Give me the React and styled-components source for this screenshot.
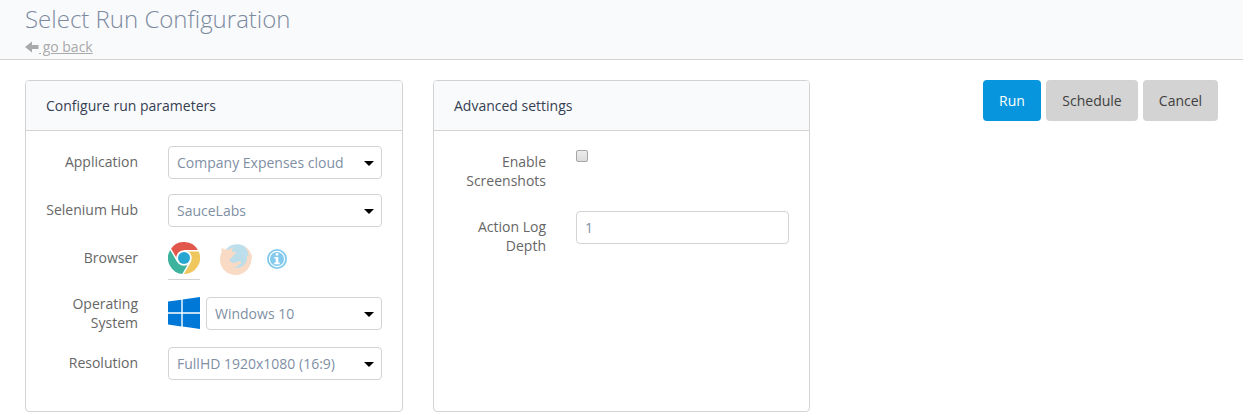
import React from "react";
import styled, { createGlobalStyle } from "styled-components";

const GlobalStyle = createGlobalStyle`
  *, *::before, *::after { box-sizing: border-box; }
  body {
    margin: 0;
    background: #fff;
    color: #666;
    font: 14px/19px "Open Sans", "Noto Sans", sans-serif;
  }
`;

const Header = styled.header`
  height: 60px;
  padding: 2px 25px 0;
  background: #f9fafc;
  border-bottom: 1px solid #d3d3d3;
`;

const Title = styled.h1`
  margin: 0;
  color: #7c8aa0;
  font-size: 24px;
  font-weight: 300;
  line-height: 33px;
`;

const BackLink = styled.a`
  display: flex;
  align-items: center;
  width: max-content;
  margin-top: 2px;
  color: #a9a9a9;

  span {
    text-decoration: underline;
    white-space: pre;
  }
`;

const Content = styled.main`
  display: flex;
  align-items: flex-start;
  padding: 20px 25px 7px;
`;

const Panel = styled.section`
  width: ${(p) => p.$width}px;
  height: 332px;
  margin-right: 30px;
  border: 1px solid #d3d3d3;
  border-radius: 4px;
  overflow: hidden;
`;

const PanelTitle = styled.h2`
  height: 50px;
  margin: 0;
  padding: 0 20px;
  background: #f9fafc;
  border-bottom: 1px solid #d3d3d3;
  color: #354052;
  font-size: 14px;
  font-weight: 400;
  line-height: 49px;
`;

const PanelBody = styled.div`
  padding: 15px 20px 0 0;
`;

const Row = styled.div`
  display: flex;
  height: ${(p) => p.$height}px;
`;

const Label = styled.label`
  flex: none;
  width: 112px;
  margin-right: 30px;
  padding: 6px 0 0 16px;
  text-align: right;
`;

const Control = styled.div`
  display: flex;
  align-items: flex-start;
  flex: 1;
  min-width: 0;
  padding-top: ${(p) => p.$top || 0}px;
`;

const SelectBox = styled.div`
  display: grid;
  flex: 1;
  align-items: center;
  margin-left: ${(p) => p.$gap || 0}px;

  > * { grid-area: 1 / 1; }
  > svg { justify-self: end; margin: 2px 8px 0 0; pointer-events: none; }
`;

const Field = styled.select`
  appearance: none;
  width: 100%;
  height: 33px;
  margin: 0;
  padding: 0 24px 0 8px;
  border: 1px solid #d3d3d3;
  border-radius: 4px;
  background: #fff;
  color: #7f8fa4;
  font: inherit;
  outline: none;
`;

const Checkbox = styled.input`
  appearance: none;
  width: 12px;
  height: 12px;
  margin: 4px 0 0;
  border: 1px solid #a6a6a6;
  border-radius: 2px;
  background: linear-gradient(#ececec, #dcdcdc);
`;

const BrowserChoice = styled.button`
  display: flex;
  align-items: flex-start;
  width: 32px;
  height: 38px;
  margin: 0 20px 0 0;
  padding: 0;
  border: 0;
  border-bottom: 1px solid ${(p) => (p.$active ? "#d3d3d3" : "transparent")};
  background: none;

  svg { flex: none; opacity: ${(p) => (p.$active ? 1 : 0.3)}; }
`;

const InfoIcon = styled.svg`
  margin: 7px 0 0 -5px;
`;

const Actions = styled.div`
  display: flex;
  gap: 5px;
  margin-left: auto;
`;

const Button = styled.button`
  width: ${(p) => p.$width}px;
  height: 41px;
  padding: 0;
  border: 0;
  border-radius: 4px;
  background: ${(p) => (p.$primary ? "#0795dd" : "#d3d3d3")};
  color: ${(p) => (p.$primary ? "#fff" : "#404040")};
  font: inherit;
`;

function Select({ value, gap }) {
  return (
    <SelectBox $gap={gap}>
      <Field defaultValue={value}>
        <option>{value}</option>
      </Field>
      <svg width="10" height="5" viewBox="0 0 10 5">
        <path d="M0 0H10L5 5Z" fill="#000" />
      </svg>
    </SelectBox>
  );
}

function Chrome() {
  return (
    <svg width="32" height="32" viewBox="0 0 32 32">
      <path d="M2.5 7.4A16 16 0 0 1 30.2 8.6H16L9.6 19.7Z" fill="#e2574c" />
      <path d="M30.2 8.6A16 16 0 0 1 15.3 32L22.4 19.7L16 8.6Z" fill="#f0c75e" />
      <path d="M15.3 32A16 16 0 0 1 2.5 7.4L9.6 19.7H22.4Z" fill="#3db39e" />
      <path d="M16 8.8H31M22.2 19.6L14.8 32.5M9.8 19.6L1.8 5.8" stroke="#fff" strokeWidth="1.5" />
      <circle cx="16" cy="16" r="7.8" fill="#fff" />
      <circle cx="16" cy="16" r="6" fill="#26a6d1" />
    </svg>
  );
}

function Firefox() {
  return (
    <svg width="32" height="34" viewBox="0 0 32 34">
      <circle cx="17" cy="16.5" r="14.3" fill="#2394bc" />
      <path
        d="M2.2 5.2C2.6 6.2 3.2 7 4 7.6C5.6 7 7.6 7.1 9.1 7.8C10.1 6.6 11.8 5.6 13.5 5.5C12.6 6.5 11.9 8 11.9 9.5L16.1 10.2C16.4 11.7 14.9 12.5 12.7 13.5L12.2 16.2L9.7 16C9.2 19.2 11.5 21.3 14.3 21C17 20.3 18.8 18.2 21.1 19.8C22 20.7 20.7 21.7 19.6 22C18.2 24 15.9 25.3 13.6 25C17.5 27 22.5 25.2 25 21.8C27.2 19 27.5 15.8 26.6 13.2C27.5 13.6 28.1 14.4 28.5 15.2C28.8 10.6 27.1 6.7 24 4.5C28.5 6.5 31 10 31.1 13.2L31.5 11.5C33.1 23.7 25.4 33 16 33C6.8 33 0 26.1 0 17.7C0 14.8.4 12.2 1.6 10.2C1.2 8.3 1.4 6.5 2.2 5.2Z"
        fill="#ec8840"
      />
    </svg>
  );
}

function Windows() {
  return (
    <svg width="32" height="32" viewBox="0 0 32 32" fill="#0078d7">
      <path d="M0 4.6L13.3 2.7V15.3H0ZM14.7 2.5L32 0V15.3H14.7ZM0 16.7H13.3V29.4L0 27.5ZM14.7 16.7H32V32L14.7 29.6Z" />
    </svg>
  );
}

export default function App() {
  return (
    <>
      <GlobalStyle />
      <Header>
        <Title>Select Run Configuration</Title>
        <BackLink>
          <svg width="14" height="12" viewBox="0 0 14 12">
            <path d="M0 6L7 .5V4H13.5V8H7V11.5Z" fill="#a9a9a9" />
          </svg>
          <span> go back</span>
        </BackLink>
      </Header>
      <Content>
        <Panel $width={378}>
          <PanelTitle>Configure run parameters</PanelTitle>
          <PanelBody>
            <Row $height={48}>
              <Label>Application</Label>
              <Control><Select value="Company Expenses cloud" /></Control>
            </Row>
            <Row $height={48}>
              <Label>Selenium Hub</Label>
              <Control><Select value="SauceLabs" /></Control>
            </Row>
            <Row $height={46}>
              <Label>Browser</Label>
              <Control>
                <BrowserChoice $active aria-label="Chrome"><Chrome /></BrowserChoice>
                <BrowserChoice aria-label="Firefox"><Firefox /></BrowserChoice>
                <InfoIcon width="20" height="20" viewBox="0 0 20 20">
                  <circle cx="10" cy="10" r="10" fill="#83caee" />
                  <circle cx="10" cy="10" r="7.6" fill="none" stroke="#fff" strokeWidth="1.1" />
                  <path d="M8.7 4.3H11.3V6.6H8.7ZM7.3 8H11.3V13.6H12.7V15.2H7.3V13.6H8.7V9.5H7.3Z" fill="#fff" />
                </InfoIcon>
              </Control>
            </Row>
            <Row $height={59}>
              <Label>Operating System</Label>
              <Control $top={9}>
                <Windows />
                <Select value="Windows 10" gap={6} />
              </Control>
            </Row>
            <Row $height={48}>
              <Label>Resolution</Label>
              <Control><Select value="FullHD 1920x1080 (16:9)" /></Control>
            </Row>
          </PanelBody>
        </Panel>
        <Panel $width={377}>
          <PanelTitle>Advanced settings</PanelTitle>
          <PanelBody>
            <Row $height={65}>
              <Label>Enable Screenshots</Label>
              <Control><Checkbox type="checkbox" /></Control>
            </Row>
            <Row $height={48}>
              <Label>Action Log Depth</Label>
              <Control><Field as="input" defaultValue="1" /></Control>
            </Row>
          </PanelBody>
        </Panel>
        <Actions>
          <Button $primary $width={58}>Run</Button>
          <Button $width={92}>Schedule</Button>
          <Button $width={75}>Cancel</Button>
        </Actions>
      </Content>
    </>
  );
}
